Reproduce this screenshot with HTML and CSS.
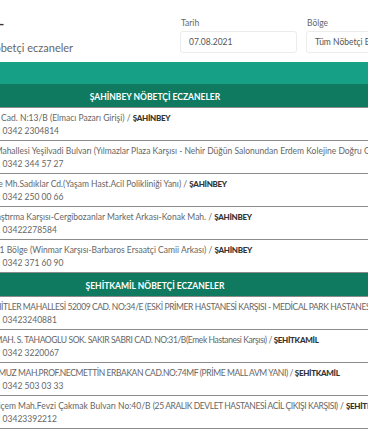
FILE: index.html
```html
<!DOCTYPE html>
<html lang="tr">
<head>
    <meta charset="UTF-8">
    <meta name="viewport" content="width=device-width, initial-scale=1.0">
    <title>Gaziantep Nöbetçi Eczaneler</title>
    <link rel="stylesheet" href="styles.css">
</head>
<body>
    <div class="page">
        <header class="top">
            <div class="brand">
                <h1>Gaziantep -</h1>
                <p>Gaziantep nöbetçi eczaneler</p>
            </div>
            <form class="filters">
                <label class="field">
                    <span>Tarih</span>
                    <div class="box">07.08.2021</div>
                </label>
                <label class="field">
                    <span>Bölge</span>
                    <div class="box">Tüm Nöbetçi Eczaneler</div>
                </label>
            </form>
        </header>

        <nav class="band"></nav>

        <section class="list">
            <h2>ŞAHİNBEY NÖBETÇİ ECZANELER</h2>
            <div class="row">
                <div class="name">Sağlık Eczanesi</div>
                <div class="info">
                    <div>Atatürk Cad. N:13/B (Elmacı Pazarı Girişi) / <b>ŞAHİNBEY</b></div>
                    <div>Telefon: 0342 2304814</div>
                </div>
            </div>
            <div class="row">
                <div class="name">Yeşilvadi Eczanesi</div>
                <div class="info">
                    <div>Yavuz Mahallesi Yeşilvadi Bulvarı (Yılmazlar Plaza Karşısı - Nehir Düğün Salonundan Erdem Kolejine Doğru Giderken) / <b>ŞAHİNBEY</b></div>
                    <div>Telefon: 0342 344 57 27</div>
                </div>
            </div>
            <div class="row">
                <div class="name">Sadıklar Eczanesi</div>
                <div class="info">
                    <div>Düztepe Mh.Sadıklar Cd.(Yaşam Hast.Acil Polikliniği Yanı) / <b>ŞAHİNBEY</b></div>
                    <div>Telefon: 0342 250 00 66</div>
                </div>
            </div>
            <div class="row">
                <div class="name">Konak Eczanesi</div>
                <div class="info">
                    <div>Uyg.Araştırma Karşısı-Cergibozanlar Market Arkası-Konak Mah. / <b>ŞAHİNBEY</b></div>
                    <div>Telefon: 03422278584</div>
                </div>
            </div>
            <div class="row">
                <div class="name">Winmar Eczanesi</div>
                <div class="info">
                    <div>Akkent 1 Bölge (Winmar Karşısı-Barbaros Ersaatçi Camii Arkası) / <b>ŞAHİNBEY</b></div>
                    <div>Telefon: 0342 371 60 90</div>
                </div>
            </div>

            <h2>ŞEHİTKAMİL NÖBETÇİ ECZANELER</h2>
            <div class="row">
                <div class="name">Medikal Eczanesi</div>
                <div class="info">
                    <div class="caps">MÜCAHİTLER MAHALLESİ 52009 CAD. NO:34/E (ESKİ PRİMER HASTANESİ KARŞISI - MEDİCAL PARK HASTANESİ YANI) / <b>ŞEHİTKAMİL</b></div>
                    <div>Telefon: 03423240881</div>
                </div>
            </div>
            <div class="row">
                <div class="name">Emek Eczanesi</div>
                <div class="info">
                    <div class="caps">EMEK MAH. S. TAHAOGLU SOK. SAKIR SABRI CAD. NO:31/B(Emek Hastanesi Karşısı) / <b>ŞEHİTKAMİL</b></div>
                    <div>Telefon: 0342 3220067</div>
                </div>
            </div>
            <div class="row">
                <div class="name">Prime Eczanesi</div>
                <div class="info">
                    <div class="caps">15 TEMMUZ MAH.PROF.NECMETTİN ERBAKAN CAD.NO:74MF (PRİME MALL AVM YANI) / <b>ŞEHİTKAMİL</b></div>
                    <div>Telefon: 0342 503 03 33</div>
                </div>
            </div>
            <div class="row">
                <div class="name">Çakmak Eczanesi</div>
                <div class="info">
                    <div>Değirmiçem Mah.Fevzi Çakmak Bulvarı No:40/B <span class="caps">(25 ARALIK DEVLET HASTANESİ ACİL ÇIKIŞI KARŞISI)</span> / <b>ŞEHİTKAMİL</b></div>
                    <div>Telefon: 03423392212</div>
                </div>
            </div>
        </section>
    </div>
</body>
</html>
```
FILE: styles.css
```css
* {
    margin: 0;
    padding: 0;
    box-sizing: border-box;
}

body {
    background: #fff;
    font-family: Lato, "Open Sans", sans-serif;
    color: #666;
    overflow: hidden;
}

/* the page is wider than the window and centred a little left of it */
.page {
    width: 1000px;
    margin-left: -345px;
}

.top {
    display: flex;
    height: 62px;
    padding: 18px 0 0 278px;
}

.brand {
    flex: 0 0 247px;
}

.brand h1 {
    font-size: 14px;
    line-height: 12px;
    font-weight: 700;
    color: #333;
}

.brand p {
    margin: 11px 0 0 4px;
    font-size: 11px;
    line-height: 14px;
    color: #666;
}

.filters {
    display: flex;
    gap: 9px;
}

.field {
    display: flex;
    flex-direction: column;
}

.field span {
    font-size: 8.5px;
    line-height: 10px;
    color: #666;
    padding-left: 1px;
}

.box {
    margin-top: 3px;
    width: 117px;
    height: 22px;
    padding: 0 8px;
    border: 1px solid #ececec;
    border-radius: 3px;
    font-size: 8.5px;
    line-height: 20px;
    color: #555;
    white-space: nowrap;
    overflow: hidden;
}

.band {
    height: 22px;
    background: #16a085;
}

.list h2 {
    height: 24px;
    line-height: 26px;
    background: #107a60;
    border-bottom: 1px solid #8c8c8c;
    color: #fff;
    font-size: 8.5px;
    font-weight: 700;
    text-align: center;
}

.row {
    display: grid;
    grid-template-columns: 316px 1fr;
    border-bottom: 1px solid #8c8c8c;
    padding: 4px 0 2px;
}

.name {
    padding-left: 20px;
    font-weight: 700;
    font-size: 9px;
    line-height: 26px;
    color: #333;
}

.info {
    font-size: 8.5px;
    line-height: 13px;
    white-space: nowrap;
    color: #666;
}

.info b {
    font-size: 8px;
    font-weight: 900;
    letter-spacing: -0.3px;
    color: #333;
}

/* upper-case addresses run wide in Lato */
.caps {
    letter-spacing: -0.4px;
}
```
